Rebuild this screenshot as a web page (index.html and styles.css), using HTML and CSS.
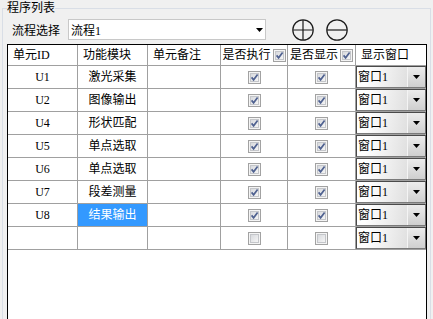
FILE: index.html
```html
<!DOCTYPE html>
<html lang="zh-CN">
<head>
    <meta charset="UTF-8">
    <meta name="viewport" content="width=device-width, initial-scale=1.0">
    <title>程序列表</title>
    <link rel="stylesheet" href="styles.css">
</head>
<body>
    <svg class="defs" width="0" height="0" aria-hidden="true">
        <defs>
            <linearGradient id="chk-fill" x1="0" y1="0" x2="1" y2="1">
                <stop offset="0" stop-color="#d6d8dc"/>
                <stop offset="1" stop-color="#f7f7f7"/>
            </linearGradient>
            <symbol id="chk-off" viewBox="0 0 13 13">
                <rect x="0.5" y="0.5" width="12" height="12" fill="#f4f4f4" stroke="#a2a2a2"/>
                <rect x="2.5" y="2.5" width="8" height="8" fill="url(#chk-fill)" stroke="#c4c6ca"/>
            </symbol>
            <symbol id="chk-on" viewBox="0 0 13 13">
                <rect x="0.5" y="0.5" width="12" height="12" fill="#f4f4f4" stroke="#a2a2a2"/>
                <rect x="2.5" y="2.5" width="8" height="8" fill="url(#chk-fill)" stroke="#c4c6ca"/>
                <path d="M3.6 6.4 L5.6 8.8 L9.6 3.6" fill="none" stroke="#4f6190" stroke-width="1.7"/>
            </symbol>
            <symbol id="arrow" viewBox="0 0 7 4">
                <polygon points="0,0 7,0 3.5,4" fill="#000"/>
            </symbol>
        </defs>
    </svg>

    <fieldset class="group">
        <legend>程序列表</legend>

        <div class="toolbar">
            <span class="label">流程选择</span>
            <div class="combo">
                <span>流程1</span>
                <svg class="combo-arrow" width="7" height="4"><use href="#arrow"/></svg>
            </div>
            <svg class="round-btn plus" width="22" height="22" viewBox="0 0 22 22">
                <circle cx="11" cy="11" r="10.2" fill="none" stroke="#1a1a1a" stroke-width="1.2"/>
                <path d="M1 11 H21 M11 1 V21" stroke="#1a1a1a" stroke-width="1.2"/>
            </svg>
            <svg class="round-btn minus" width="22" height="22" viewBox="0 0 22 22">
                <circle cx="11" cy="11" r="10.2" fill="none" stroke="#1a1a1a" stroke-width="1.2"/>
                <path d="M1 11 H21" stroke="#1a1a1a" stroke-width="1.2"/>
            </svg>
        </div>

        <div class="grid">
            <div class="row head">
                <div class="cell">单元ID</div>
                <div class="cell">功能模块</div>
                <div class="cell">单元备注</div>
                <div class="cell check-head">是否执行<svg class="chk"><use href="#chk-on"/></svg></div>
                <div class="cell check-head">是否显示<svg class="chk"><use href="#chk-on"/></svg></div>
                <div class="cell">显示窗口</div>
            </div>

            <div class="row">
                <div class="cell">U1</div>
                <div class="cell">激光采集</div>
                <div class="cell"></div>
                <div class="cell"><svg class="chk"><use href="#chk-on"/></svg></div>
                <div class="cell"><svg class="chk"><use href="#chk-on"/></svg></div>
                <div class="cell cell-win"><div class="win"><span class="win-text">窗口1</span><span class="win-btn"><svg width="7" height="4"><use href="#arrow"/></svg></span></div></div>
            </div>
            <div class="row">
                <div class="cell">U2</div>
                <div class="cell">图像输出</div>
                <div class="cell"></div>
                <div class="cell"><svg class="chk"><use href="#chk-on"/></svg></div>
                <div class="cell"><svg class="chk"><use href="#chk-on"/></svg></div>
                <div class="cell cell-win"><div class="win"><span class="win-text">窗口1</span><span class="win-btn"><svg width="7" height="4"><use href="#arrow"/></svg></span></div></div>
            </div>
            <div class="row">
                <div class="cell">U4</div>
                <div class="cell">形状匹配</div>
                <div class="cell"></div>
                <div class="cell"><svg class="chk"><use href="#chk-on"/></svg></div>
                <div class="cell"><svg class="chk"><use href="#chk-on"/></svg></div>
                <div class="cell cell-win"><div class="win"><span class="win-text">窗口1</span><span class="win-btn"><svg width="7" height="4"><use href="#arrow"/></svg></span></div></div>
            </div>
            <div class="row">
                <div class="cell">U5</div>
                <div class="cell">单点选取</div>
                <div class="cell"></div>
                <div class="cell"><svg class="chk"><use href="#chk-on"/></svg></div>
                <div class="cell"><svg class="chk"><use href="#chk-on"/></svg></div>
                <div class="cell cell-win"><div class="win"><span class="win-text">窗口1</span><span class="win-btn"><svg width="7" height="4"><use href="#arrow"/></svg></span></div></div>
            </div>
            <div class="row">
                <div class="cell">U6</div>
                <div class="cell">单点选取</div>
                <div class="cell"></div>
                <div class="cell"><svg class="chk"><use href="#chk-on"/></svg></div>
                <div class="cell"><svg class="chk"><use href="#chk-on"/></svg></div>
                <div class="cell cell-win"><div class="win"><span class="win-text">窗口1</span><span class="win-btn"><svg width="7" height="4"><use href="#arrow"/></svg></span></div></div>
            </div>
            <div class="row">
                <div class="cell">U7</div>
                <div class="cell">段差测量</div>
                <div class="cell"></div>
                <div class="cell"><svg class="chk"><use href="#chk-on"/></svg></div>
                <div class="cell"><svg class="chk"><use href="#chk-on"/></svg></div>
                <div class="cell cell-win"><div class="win"><span class="win-text">窗口1</span><span class="win-btn"><svg width="7" height="4"><use href="#arrow"/></svg></span></div></div>
            </div>
            <div class="row">
                <div class="cell">U8</div>
                <div class="cell"><span class="selected">结果输出</span></div>
                <div class="cell"></div>
                <div class="cell"><svg class="chk"><use href="#chk-on"/></svg></div>
                <div class="cell"><svg class="chk"><use href="#chk-on"/></svg></div>
                <div class="cell cell-win"><div class="win"><span class="win-text">窗口1</span><span class="win-btn"><svg width="7" height="4"><use href="#arrow"/></svg></span></div></div>
            </div>
            <div class="row">
                <div class="cell"></div>
                <div class="cell"></div>
                <div class="cell"></div>
                <div class="cell"><svg class="chk"><use href="#chk-off"/></svg></div>
                <div class="cell"><svg class="chk"><use href="#chk-off"/></svg></div>
                <div class="cell cell-win"><div class="win"><span class="win-text">窗口1</span><span class="win-btn"><svg width="7" height="4"><use href="#arrow"/></svg></span></div></div>
            </div>
        </div>
    </fieldset>
</body>
</html>
```

FILE: styles.css
```css
body {
    margin: 0;
    background-color: #f0f0f0;
    font-family: "Liberation Serif", "Noto Sans CJK SC", serif;
    font-size: 12px;
    color: #000;
    overflow: hidden;
}
.defs {
    position: absolute;
    width: 0;
    height: 0;
}
.group {
    margin: 0 2px;
    padding: 3px 3px 0 4px;
    border: 1px solid #d9dee6;
    min-width: 0;
    height: 330px;
}
.group legend {
    padding: 0;
    line-height: 16px;
}
.toolbar {
    display: flex;
    align-items: center;
    height: 21px;
}
.label {
    width: 61px;
    box-sizing: border-box;
    padding-left: 5px;
}
.combo {
    width: 198px;
    height: 21px;
    box-sizing: border-box;
    border: 1px solid #c8c8c8;
    background-color: #fff;
    display: flex;
    align-items: center;
    justify-content: space-between;
    padding: 0 2px 0 2px;
}
.combo-arrow {
    margin-top: 1px;
}
.round-btn.plus {
    margin-left: 26px;
}
.round-btn.minus {
    margin-left: 12px;
}
.grid {
    margin-top: 4px;
    width: 420px;
    height: 300px;
    box-sizing: border-box;
    border: 1px solid #000;
    border-bottom: none;
    background-color: #fff;
}
.row {
    display: grid;
    grid-template-columns: 70px 70px 73px 67px 68px 70px;
    height: 23px;
}
.row.head {
    height: 21px;
}
.cell {
    box-sizing: border-box;
    border-right: 1px solid #a0a0a0;
    border-bottom: 1px solid #a0a0a0;
    display: flex;
    align-items: center;
    justify-content: center;
    line-height: 14px;
    white-space: nowrap;
}
.cell:last-child {
    border-right: none;
}
.head .cell {
    justify-content: flex-start;
    padding-left: 5px;
}
.head .check-head {
    justify-content: center;
    padding-left: 0;
    gap: 2px;
}
.chk {
    width: 13px;
    height: 13px;
    flex: none;
}
.selected {
    align-self: stretch;
    flex: 1;
    display: flex;
    align-items: center;
    justify-content: center;
    background-color: #3399ff;
    color: #fff;
}
.cell-win {
    align-items: stretch;
}
.win {
    flex: 1;
    display: flex;
    box-sizing: border-box;
    border: 1px solid #4a4a4a;
    border-right-color: #6a6a6a;
    border-bottom-color: #7a7a7a;
    background: linear-gradient(100deg, #ffffff 15%, #d2d2d2 100%);
}
.win-text {
    flex: 1;
    display: flex;
    align-items: center;
    padding-left: 1px;
}
.win-btn {
    width: 17px;
    display: flex;
    align-items: center;
    justify-content: center;
    border-left: 1px solid #f4f4f4;
    background: linear-gradient(to bottom, #ececec, #cfcfcf);
}
```
